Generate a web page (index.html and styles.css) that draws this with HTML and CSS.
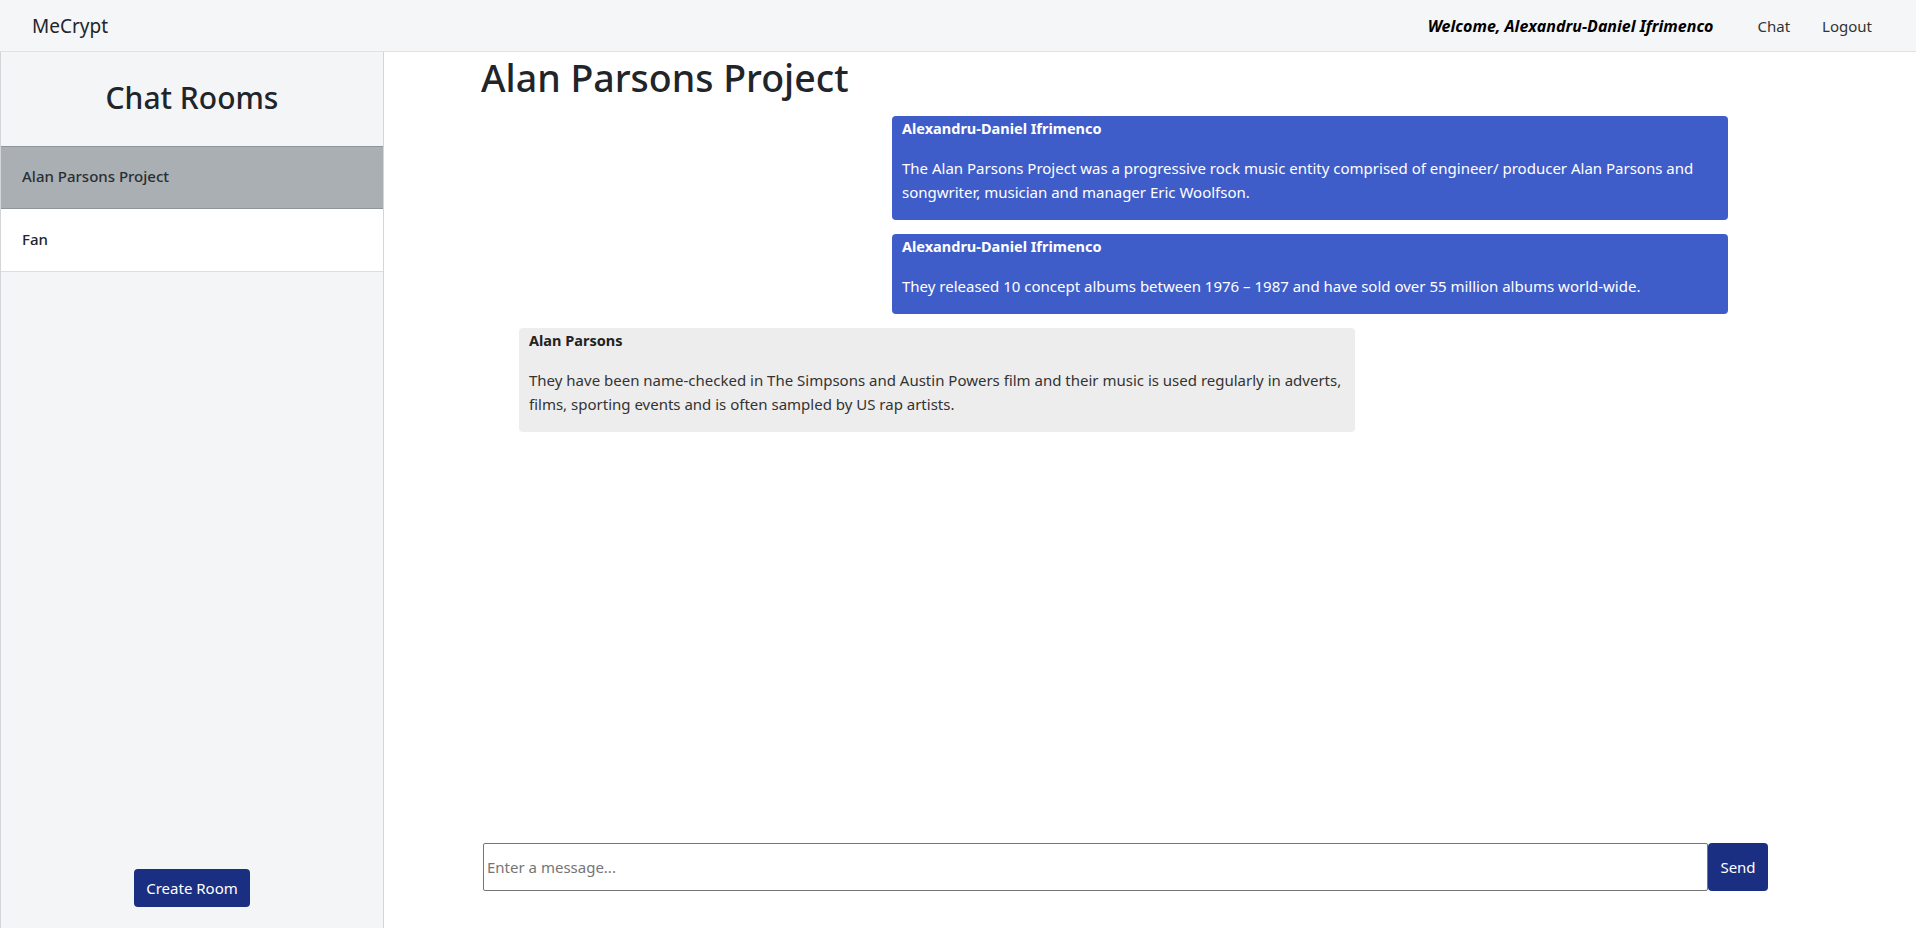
FILE: index.html
```html
<!DOCTYPE html>
<html lang="en">
<head>
<meta charset="utf-8">
<title>MeCrypt</title>
<link rel="stylesheet" href="styles.css">
</head>
<body>
<nav class="navbar">
  <a class="brand" href="#">MeCrypt</a>
  <div class="nav-right">
    <span class="welcome">Welcome, Alexandru-Daniel Ifrimenco</span>
    <a class="nav-link" href="#">Chat</a>
    <a class="nav-link" href="#">Logout</a>
  </div>
</nav>
<div class="layout">
  <aside class="sidebar">
    <div class="sidebar-head"><h2>Chat Rooms</h2></div>
    <ul class="rooms">
      <li class="room active">Alan Parsons Project</li>
      <li class="room">Fan</li>
    </ul>
    <div class="sidebar-foot"><button class="btn">Create Room</button></div>
  </aside>
  <main class="main">
    <h1 class="title">Alan Parsons Project</h1>
    <div class="messages">
      <div class="msg sent">
        <strong class="author">Alexandru-Daniel Ifrimenco</strong>
        <p>The Alan Parsons Project was a progressive rock music entity comprised of engineer/ producer Alan Parsons and songwriter, musician and manager Eric Woolfson.</p>
      </div>
      <div class="msg sent">
        <strong class="author">Alexandru-Daniel Ifrimenco</strong>
        <p>They released 10 concept albums between 1976 – 1987 and have sold over 55 million albums world-wide.</p>
      </div>
      <div class="msg received">
        <strong class="author">Alan Parsons</strong>
        <p>They have been name-checked in The Simpsons and Austin Powers film and their music is used regularly in adverts, films, sporting events and is often sampled by US rap artists.</p>
      </div>
    </div>
    <form class="composer">
      <input class="input" type="text" placeholder="Enter a message...">
      <button class="btn send" type="button">Send</button>
    </form>
  </main>
</div>
</body>
</html>
```
FILE: styles.css
```css
* { box-sizing: border-box; }
html, body { margin: 0; height: 100%; }
body {
  font-family: "Noto Sans", "Open Sans", sans-serif;
  color: #212529;
  display: flex;
  flex-direction: column;
  height: 100vh;
  overflow: hidden;
}
.navbar {
  height: 52px;
  flex: none;
  background: #f5f6f8;
  border-bottom: 1px solid #dfe1e4;
  display: flex;
  align-items: center;
  justify-content: space-between;
  padding: 0 44px 0 32px;
}
.brand {
  font-size: 19px;
  color: #212529;
  text-decoration: none;
}
.nav-right { display: flex; align-items: center; }
.welcome {
  font-weight: 700;
  font-style: italic;
  font-size: 16px;
  color: #000;
  margin-right: 44px;
}
.nav-link {
  font-size: 15px;
  color: #333;
  text-decoration: none;
  margin-left: 32px;
}
.nav-link:first-of-type { margin-left: 0; }
.layout { flex: 1; display: flex; min-height: 0; }
.sidebar {
  width: 384px;
  flex: none;
  background: #f4f5f7;
  border-left: 1px solid #d3d5d8;
  border-right: 1px solid #d3d5d8;
  display: flex;
  flex-direction: column;
}
.sidebar-head {
  height: 94px;
  display: flex;
  align-items: center;
  justify-content: center;
}
.sidebar-head h2 {
  margin: 0;
  font-size: 30px;
  font-weight: 500;
  padding-bottom: 4px;
}
.rooms { list-style: none; margin: 0; padding: 0; }
.room {
  height: 63px;
  display: flex;
  align-items: center;
  padding: 0 0 3px 21px;
  font-size: 15px;
  font-weight: 500;
  background: #fff;
  border-bottom: 1px solid #dcdee1;
}
.room.active {
  background: #a9afb2;
  border-top: 1px solid #8f9599;
  border-bottom: 1px solid #8f9599;
  color: #2a2e33;
}
.sidebar-foot {
  margin-top: auto;
  display: flex;
  justify-content: center;
  padding-bottom: 21px;
}
.btn {
  font-family: inherit;
  background: #1b2f82;
  color: #fff;
  border: none;
  border-radius: 4px;
  font-size: 15px;
  height: 38px;
  padding: 0 12px;
}
.main {
  flex: 1;
  display: flex;
  flex-direction: column;
  padding: 0 148px 37px 97px;
  min-width: 0;
}
.title {
  margin: 0;
  font-size: 37.5px;
  font-weight: 500;
  line-height: 1.2;
  padding-top: 3px;
}
.messages {
  flex: 1;
  display: flex;
  flex-direction: column;
  gap: 14px;
  padding: 16px 40px 0 38px;
}
.msg {
  width: 836px;
  border-radius: 4px;
  padding: 0 10px 16px;
  font-size: 15px;
  line-height: 24px;
}
.msg .author { display: block; font-weight: 700; font-size: 14.5px; }
.msg p { margin: 16px 0 0; }
.sent { align-self: flex-end; background: #3f5dc9; color: #fff; }
.received { align-self: flex-start; background: #ededed; color: #333; }
.received .author { color: #222; }
.composer { display: flex; height: 48px; flex: none; padding-left: 2px; }
.input {
  flex: 1;
  font-family: inherit;
  font-size: 15px;
  border: 1px solid #767676;
  border-radius: 2px;
  padding: 0 3px;
  color: #333;
}
.input::placeholder { color: #757575; }
.send { height: 48px; width: 60px; padding: 0; border-radius: 4px; }
```
